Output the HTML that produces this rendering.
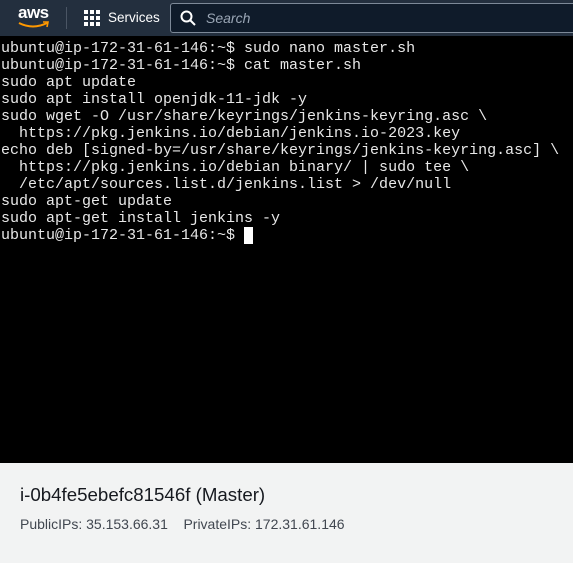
<!DOCTYPE html>
<html><head><style>
body{margin:0;width:573px;height:563px;overflow:hidden;background:#000;font-family:"Liberation Sans",sans-serif}
.hdr{position:absolute;left:0;top:0;width:573px;height:36px;background:#232f3e}
.term{position:absolute;left:0;top:40px;width:573px;height:423px;background:#000;color:#e8e8e8;font:15px/17px "Liberation Mono",monospace;white-space:pre;padding-left:1px}
.bot{position:absolute;left:0;top:463px;width:573px;height:100px;background:#f2f3f3;color:#16191f}
</style></head><body>
<div class="hdr">
<div style="position:absolute;left:18px;top:3px;color:#fff;font:bold 17px 'Liberation Sans',sans-serif;letter-spacing:-0.5px">aws</div>
<svg style="position:absolute;left:17px;top:20px" width="34" height="10"><path d="M2 3 Q16 10 30 3" stroke="#ff9900" stroke-width="2" fill="none"/><path d="M26 2 L31 2 L30 7" stroke="#ff9900" stroke-width="1.6" fill="none"/></svg>
<div style="position:absolute;left:66px;top:7px;width:1px;height:22px;background:#4a5564"></div>
<svg style="position:absolute;left:84px;top:10px" width="17" height="17" fill="#fff"><rect x="0" y="0" width="4" height="4"/><rect x="6" y="0" width="4" height="4"/><rect x="12" y="0" width="4" height="4"/><rect x="0" y="6" width="4" height="4"/><rect x="6" y="6" width="4" height="4"/><rect x="12" y="6" width="4" height="4"/><rect x="0" y="12" width="4" height="4"/><rect x="6" y="12" width="4" height="4"/><rect x="12" y="12" width="4" height="4"/></svg>
<div style="position:absolute;left:108px;top:10px;color:#fff;font-size:13.5px">Services</div>
<div style="position:absolute;left:170px;top:3px;width:420px;height:28px;border:1px solid #7d8998;border-radius:3px;background:#0f1b2a"></div>
<svg style="position:absolute;left:180px;top:10px" width="16" height="16"><circle cx="6.5" cy="6.5" r="5" stroke="#fff" stroke-width="2" fill="none"/><path d="M10 10 L15 15" stroke="#fff" stroke-width="2"/></svg>
<div style="position:absolute;left:206px;top:10px;color:#9ba7b6;font-style:italic;font-size:14px">Search</div>
</div>
<div class="term">ubuntu@ip-172-31-61-146:~$ sudo nano master.sh
ubuntu@ip-172-31-61-146:~$ cat master.sh
sudo apt update
sudo apt install openjdk-11-jdk -y
sudo wget -O /usr/share/keyrings/jenkins-keyring.asc \
  https://pkg.jenkins.io/debian/jenkins.io-2023.key
echo deb [signed-by=/usr/share/keyrings/jenkins-keyring.asc] \
  https://pkg.jenkins.io/debian binary/ | sudo tee \
  /etc/apt/sources.list.d/jenkins.list &gt; /dev/null
sudo apt-get update
sudo apt-get install jenkins -y
ubuntu@ip-172-31-61-146:~$ <span style="background:#fff">&nbsp;</span></div>
<div class="bot">
<div style="position:absolute;left:20px;top:21px;font-size:18.7px">i-0b4fe5ebefc81546f (Master)</div>
<div style="position:absolute;left:20px;top:53px;font-size:14px;color:#414750">PublicIPs: 35.153.66.31&nbsp;&nbsp;&nbsp;&nbsp;PrivateIPs: 172.31.61.146</div>
</div>
</body></html>
